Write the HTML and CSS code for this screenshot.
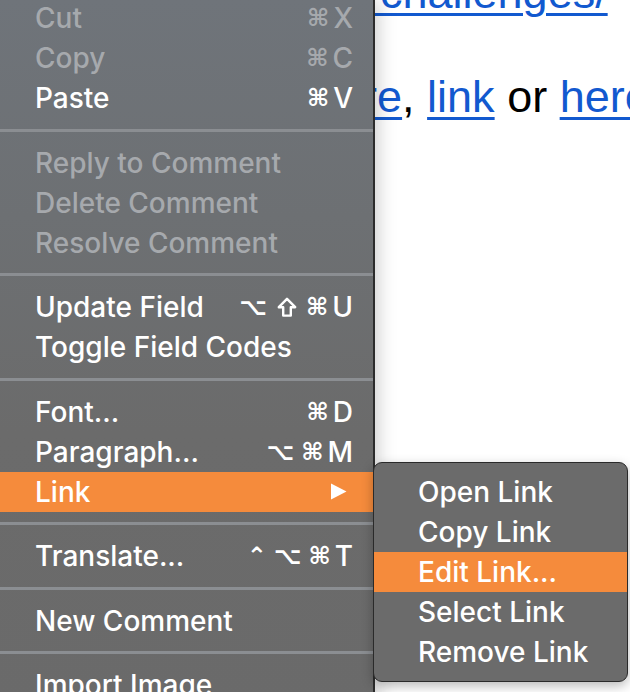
FILE: index.html
```html
<!DOCTYPE html>
<html>
<head>
<meta charset="utf-8">
<link rel="stylesheet" href="styles.css">
</head>
<body>
<div class="doc">
  <div class="line line1"><a href="#">s/challenges/</a></div>
  <div class="line line2"><a href="#">here</a>, <a href="#">link</a> or <a href="#">here</a></div>
</div>

<div class="menu">
  <div class="item disabled first"><span class="label">Cut</span><span class="keys"><span class="sym">⌘</span><span class="ch">X</span></span></div>
  <div class="item disabled"><span class="label">Copy</span><span class="keys"><span class="sym">⌘</span><span class="ch">C</span></span></div>
  <div class="item"><span class="label">Paste</span><span class="keys"><span class="sym">⌘</span><span class="ch">V</span></span></div>
  <div class="sep"></div>
  <div class="item disabled"><span class="label">Reply to Comment</span></div>
  <div class="item disabled"><span class="label">Delete Comment</span></div>
  <div class="item disabled"><span class="label">Resolve Comment</span></div>
  <div class="sep"></div>
  <div class="item"><span class="label">Update Field</span><span class="keys"><span class="sym">⌥</span><svg class="shift" width="20" height="20" viewBox="0 0 20 20"><path d="M10 1.8 L18.2 10.2 L13.8 10.2 L13.8 18.6 L6.2 18.6 L6.2 10.2 L1.8 10.2 Z" fill="none" stroke="#fff" stroke-width="2.4" stroke-linejoin="round"/></svg><span class="sym">⌘</span><span class="ch">U</span></span></div>
  <div class="item"><span class="label">Toggle Field Codes</span></div>
  <div class="sep"></div>
  <div class="item"><span class="label">Font...</span><span class="keys"><span class="sym">⌘</span><span class="ch">D</span></span></div>
  <div class="item"><span class="label">Paragraph...</span><span class="keys"><span class="sym">⌥</span><span class="sym">⌘</span><span class="ch">M</span></span></div>
  <div class="item active"><span class="label">Link</span><svg class="arrow" width="17" height="17" viewBox="0 0 17 17"><polygon points="1,0.5 16.5,8.5 1,16.5" fill="#fff"/></svg></div>
  <div class="sep"></div>
  <div class="item"><span class="label">Translate...</span><span class="keys"><span class="sym">⌃</span><span class="sym">⌥</span><span class="sym">⌘</span><span class="ch">T</span></span></div>
  <div class="sep"></div>
  <div class="item"><span class="label">New Comment</span></div>
  <div class="sep"></div>
  <div class="item"><span class="label">Import Image</span></div>
</div>

<div class="submenu">
  <div class="item sub"><span class="label">Open Link</span></div>
  <div class="item sub"><span class="label">Copy Link</span></div>
  <div class="item sub active"><span class="label">Edit Link...</span></div>
  <div class="item sub"><span class="label">Select Link</span></div>
  <div class="item sub"><span class="label">Remove Link</span></div>
</div>
</body>
</html>
```

FILE: styles.css
```css
html, body {
  margin: 0;
  padding: 0;
  width: 630px;
  height: 692px;
  overflow: hidden;
  background: #ffffff;
}

body {
  position: relative;
  font-family: "Liberation Sans", Arial, sans-serif;
}

.doc {
  margin-top: -32px;
  font-size: 45px;
  line-height: 50px;
  color: #000;
  white-space: nowrap;
}

.doc a {
  color: #1259cf;
  text-decoration: underline;
  text-decoration-thickness: 3px;
  text-underline-offset: 5px;
}

.line1 {
  padding-left: 345px;
}

.line2 {
  margin-top: 54px;
  padding-left: 312px;
}

.menu {
  position: absolute;
  left: 0;
  top: 0;
  width: 373px;
  height: 720px;
  background: linear-gradient(180deg, #6f747a 0%, #6d7073 30%, #6b6b6b 60%, #6a6a6a 100%);
  border-right: 2px solid #2c2c2c;
  box-shadow: 2px 0 18px rgba(0, 0, 0, 0.22);
  font-family: Inter, "Noto Sans", sans-serif;
  font-weight: 500;
}

.item {
  display: flex;
  align-items: center;
  box-sizing: border-box;
  height: 40px;
  padding: 0 20px 0 35px;
  font-size: 28px;
  color: #ffffff;
  white-space: nowrap;
}

.item.first {
  margin-top: -2px;
}

.item .label {
  flex: 1;
}

.item.disabled {
  color: #a6a9ad;
}

.item.active {
  background: #f58b3c;
}

.keys {
  display: flex;
  align-items: center;
  gap: 7px;
}

.keys .sym {
  font-family: "DejaVu Sans", sans-serif;
  font-weight: bold;
  font-size: 24px;
}

.keys .shift {
  margin: 0 2px 0 3px;
}

.keys .ch {
  font-size: 28px;
  margin-left: -3px;
}

.arrow {
  margin-right: 6px;
}

.sep {
  height: 24.5px;
  display: flex;
  align-items: center;
}

.sep::before {
  content: "";
  display: block;
  width: 100%;
  height: 3px;
  background: #8b8e92;
}

.submenu {
  position: absolute;
  left: 373px;
  top: 462px;
  width: 253px;
  padding: 9px 0;
  background: #6b6b6b;
  border: 1px solid #2a2a2a;
  border-radius: 9px;
  box-shadow: 0 4px 12px rgba(0, 0, 0, 0.28);
  font-family: Inter, "Noto Sans", sans-serif;
  font-weight: 500;
}

.item.sub {
  padding-left: 44px;
}
```
